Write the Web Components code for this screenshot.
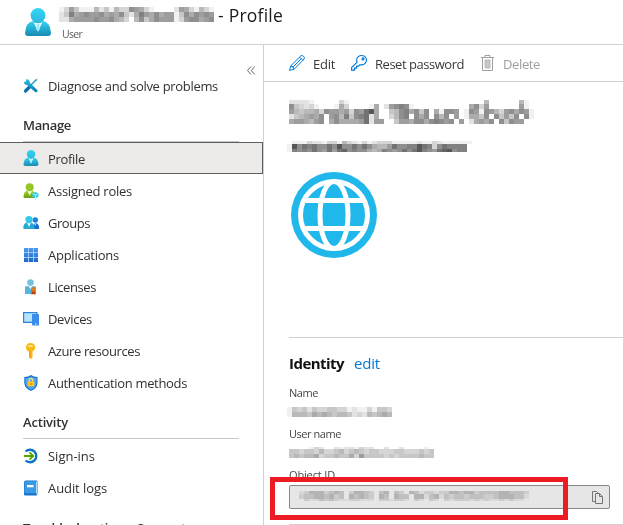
<!DOCTYPE html>
<html lang="en">
<head>
<meta charset="utf-8">
<title>Profile</title>
<style>
html,body{margin:0;height:100%;overflow:hidden;background:#fff}
body{font-family:"Open Sans","Noto Sans",sans-serif;color:#323130}
</style>
</head>
<body>
<user-blade></user-blade>
<script>
const ICONS={
user:`<svg viewBox="0 0 26 28"><defs><linearGradient id="a" x2="0" y2="1"><stop stop-color="#32d4f5"/><stop offset="1" stop-color="#198ab3"/></linearGradient><linearGradient id="b" x2="0" y2="1"><stop stop-color="#35d5f6"/><stop offset="1" stop-color="#2cb8dc"/></linearGradient></defs><path fill="url(#a)" d="M3 28Q0 28 0 25Q1 14 8 13H18Q25 14 26 25Q26 28 23 28Z"/><path fill="#e9fbff" d="M8.5 14L13 23.5L17.5 14Q13 16.5 8.500 14Z"/><path fill="#9ee9fb" d="M11.500 16h3l-.5 2 1 3-2 2.500-2-2.500 1-3z"/><circle cx="13" cy="7.500" r="7.400" fill="url(#b)"/></svg>`,
tools:`<svg viewBox="0 0 16 16"><defs><linearGradient id="a" x2="0" y2="1"><stop stop-color="#32bedd"/><stop offset="1" stop-color="#0078b4"/></linearGradient></defs><path d="M13.200 1.800 7 8" stroke="#2296c8" stroke-width="1.400"/><path d="M7.500 8 2.500 13" stroke="#0870ad" stroke-width="3.200" stroke-linecap="round"/><path fill="url(#a)" d="M3.500 1 2.800 3.400 1 4Q1 6.800 4.200 7L11.600 13.600Q13 15 14.200 13.700Q15.200 12.400 13.800 11.400L6.900 5Q7 1.600 3.500 1Z"/><path d="m12.500 1.500 2-.8-.8 2.200z" fill="#4a9fc4"/></svg>`,
roles:`<svg viewBox="0 0 16 16"><defs><linearGradient id="a" x2="0" y2="1"><stop stop-color="#a8d52c"/><stop offset="1" stop-color="#659f13"/></linearGradient></defs><path fill="url(#a)" d="M1.500 15Q.5 15 .5 13.500Q1 8 5 7.600H8Q12 8 12.500 13.500V15Z"/><path d="M4.500 8 6.700 12.500 9 8Z" fill="#f4fbd8"/><circle cx="6.700" cy="4.300" r="4" fill="#92c823"/><path d="m12.500 9 3 1.500v3L12.500 15.500 9.300 13.500v-3z" fill="#32cbe8"/><path d="m9.500 10.600 3 1.600 2.900-1.600M12.500 12v3" stroke="#b0effa" fill="none"/></svg>`,
groups:`<svg viewBox="0 0 16 16"><path d="M10 14q-.5-5 2.500-6Q16 8.500 16 13v1Z" fill="#136fcf"/><circle cx="12.300" cy="5" r="2.700" fill="#1683dc"/><path d="M1.200 14Q0 14 .3 12Q.8 8 4 7.500H7.500Q11.300 8 11.600 13v1Z" fill="#28a8d1"/><path d="m4.200 8 1.800 4 1.800-4Z" fill="#f0fcff"/><circle cx="6" cy="4.600" r="3.600" fill="#32c8e9"/><path d="m11.300 8.500 1 2.500 1-2.500z" fill="#d8eeff"/></svg>`,
apps:`<svg viewBox="0 0 16 16"><defs><linearGradient id="a" gradientUnits="userSpaceOnUse" x1="0" y1="1" x2="0" y2="15"><stop stop-color="#4b9cf0"/><stop offset="1" stop-color="#1f68c8"/></linearGradient></defs><path fill="#9cc8f4" d="M1 1h14v14H1z"/><path fill="url(#a)" d="M1 1h4v4H1zM6 1h4v4H6zM11 1h4v4h-4zM1 6h4v4H1zM6 6h4v4H6zM11 6h4v4h-4zM1 11h4v4H1zM6 11h4v4H6zM11 11h4v4h-4z"/></svg>`,
license:`<svg viewBox="0 0 16 16"><path d="M2 7.500 5.500 7 7.500 10 9.500 7 13 7.500V15H2Z" fill="#59b4d9"/><path d="m5.500 7 2 2.500 2-2.500z" fill="#e0f4fb"/><circle cx="7.500" cy="3.600" r="3.300" fill="#72c1df"/><path d="M8.600 11h3.600v5l-1.800-1.300L8.600 16z" fill="#b5440e"/><circle cx="10.400" cy="10.400" r="2.300" fill="#df7d18"/></svg>`,
devices:`<svg viewBox="0 0 16 16"><path d="M0 1h14.500v11H0z" fill="#2984df"/><path d="M1.200 2.200h12v8.500h-12z" fill="#b7e4fb"/><path d="M4 12h5v1.500H4z" fill="#fff"/><path d="M9 3h6q1 0 1 1v10.500H10q-1 0-1-1z" fill="#3a8de8"/><path d="M12 13h1.500" stroke="#d8eeff"/></svg>`,
key:`<svg viewBox="0 0 16 16"><path d="M7.500 0Q12 .2 12.200 4.500Q12 7.500 9.500 8.600V14.500L8 16 6 14.500V8.600Q3 7.500 3 4.500Q3.200.2 7.500 0Z" fill="#fcb913"/><path d="M5.300 3.200h4.500" stroke="#fff0ae" stroke-width="1.500"/><path d="M7 8v6.500" stroke="#f18d08"/></svg>`,
shield:`<svg viewBox="0 0 16 16"><path d="M8 0Q10.500 2 14.500 2V8Q14 13.500 8 16Q1.800 13.500 1.300 8V2Q5.500 2 8 0Z" fill="#126fcc"/><path d="M8 1.400Q10.500 3 13.500 3V8Q13 12.500 8 14.700Q3 12.500 2.400 8V3Q5.500 3 8 1.400Z" fill="#51a5f2"/><path d="M6.200 7V5.500q0-2 1.800-2t1.800 2V7" fill="none" stroke="#f7d875" stroke-width="1.300"/><path d="M4.700 6.500h6.600v4.700H4.700z" fill="#ffc51b"/><path d="M7 8.400h2v1H7z" fill="#bd8400"/></svg>`,
signin:`<svg viewBox="0 0 16 16"><path d="M2.600 3.500A6.300 6.300 0 1 1 2.600 12.500" fill="none" stroke="#0c72ca" stroke-width="2.400"/><path d="M1 8h9M6.500 4.300 10.300 8 6.500 11.700" fill="none" stroke="#57a300" stroke-width="1.800"/></svg>`,
book:`<svg viewBox="0 0 16 16"><path d="M3 .5h10.500q1 0 1 1v11.500l-1 2.500H2.300q-1.300 0-1.300-1.500V2.500Q1 .5 3 .5Z" fill="#1474ca"/><path d="M3 1.200H13v12H2Q1.500 13 1.500 12V2.700Q1.500 1.200 3 1.200Z" fill="#3a9ae5"/><path d="M13.500 1.500v12" stroke="#b8dcf6"/><path d="M4 5h6.500v2.300H4z" fill="#fff"/></svg>`,
edit:`<svg viewBox="0 0 16 16" fill="none" stroke="#0078d4"><path d="M.6 15.400 1.800 10.800 11.800.9Q13.300-.1 14.600 1.400Q16 2.900 15 4.300L5.100 14.200ZM1.800 10.800Q4.500 11.300 5.100 14.200M10.600 2.100 13.900 5.400M3.500 12.500 12.200 3.800"/></svg>`,
reset:`<svg viewBox="0 0 16 16" fill="none" stroke="#0078d4" stroke-width="1.100"><circle cx="12" cy="3.900" r="1"/><path d="M6.100 7.100Q4.900 3.700 7.300 1.700Q9.900-.4 13.200 1.100Q16.300 3.200 15.200 6.700Q13.400 10.500 9 9.700L7.600 11.100H5.600V13.100H3.600V15.100H.6V12.600Z"/></svg>`,
trash:`<svg viewBox="0 0 13 16" fill="none" stroke="#a19f9d"><path d="M0 2.500h13M4 2V.5h5V2M1.500 3v12.500h10V3"/><path d="M4 5h5v8H4z" fill="#c8c6c4" stroke="#bcbab8"/></svg>`,
copy:`<svg viewBox="0 0 11 13" fill="none" stroke="#767472"><path d="M3.500 10.500H.5V.5h4l2 2"/><path d="M3.500 2.500H7.500L10.500 5.500V12.500H3.500ZM7.500 2.500V5.500H10.500"/></svg>`,
globe:`<svg viewBox="0 0 86 86"><circle cx="43" cy="43" r="43" fill="#20b7eb"/><g fill="none" stroke="#fff" stroke-width="5"><circle cx="43" cy="43" r="33.500"/><ellipse cx="43" cy="43" rx="14" ry="33.500"/><path d="M13 28.500H73M13 56.500H73"/></g></svg>`,
collapse:`<svg viewBox="0 0 8 9" fill="none" stroke="#555" stroke-width=".9"><path d="M4 .5.500 4.500 4 8.500M7.700.5 4.200 4.500 7.700 8.500"/></svg>`
};
const define=(name,render,after)=>customElements.define(name,class extends HTMLElement{
 connectedCallback(){
  if(this.shadowRoot)return;
  this.attachShadow({mode:'open'}).innerHTML=render(this);
  if(after)after(this,this.shadowRoot);
 }
});
define('az-icon',e=>`<style>:host{display:block;flex:none;width:${e.getAttribute('w')||16}px;height:${e.getAttribute('h')||16}px}svg{display:block;width:100%;height:100%;overflow:visible}</style>${ICONS[e.getAttribute('name')]}`);

/* A line of text whose tracking is set so that it fills the width it is given. */
define('fit-text',e=>`<style>:host{display:block;white-space:nowrap;width:${e.getAttribute('w')}px}span{display:inline-block}</style><span>${e.getAttribute('text')}</span>`,(e,r)=>{
 const s=r.querySelector('span'),n=e.getAttribute('text').length;
 s.style.letterSpacing=((+e.getAttribute('w')-s.getBoundingClientRect().width)/n)+'px';
});

/* Mosaic over private data: one hex digit of darkness for each cell. */
define('pixel-mask',e=>{
 const rows=e.getAttribute('cells').trim().split(/\s+/),hs=e.getAttribute('rows').split(',').map(Number);
 let y=0,out='';
 rows.forEach((row,j)=>{[...row].forEach((c,i)=>{const v=255-parseInt(c,16)*14;if(c!=='0')out+=`<rect x="${i*5}" y="${y}" width="5" height="${hs[j]}" fill="rgb(${v},${v},${v})"/>`});y+=hs[j]});
 const w=Math.max(...rows.map(r=>r.length))*5;
 return `<style>:host{display:block;flex:none;width:${w}px;height:${y}px;mix-blend-mode:multiply}svg{display:block}</style><svg width="${w}" height="${y}" shape-rendering="crispEdges" aria-label="Redacted">${out}</svg>`;
});

define('nav-item',e=>`<style>
:host{display:flex;align-items:center;box-sizing:border-box;height:32px;padding-left:23px;gap:9px;font-size:13px;line-height:18px;color:#323130}
:host([selected]){background:#edebe9;border:1px solid #605e5c;border-left:0}
az-icon{margin-top:-1px}fit-text{margin-top:-1px}:host([selected]) fit-text{margin-top:1px}
</style><az-icon name="${e.getAttribute('icon')}"></az-icon><fit-text w="${e.getAttribute('w')}" text="${e.getAttribute('label')}"></fit-text>`);

define('nav-heading',e=>`<style>
:host{display:flex;align-items:center;box-sizing:border-box;height:33px;width:216px;margin-left:23px;border-bottom:1px solid #c8c6c4;font-size:13px;font-weight:600;color:#323130}
</style><fit-text w="${e.getAttribute('w')}" text="${e.getAttribute('label')}"></fit-text>`);

define('side-nav',()=>`<style>
:host{display:block;box-sizing:border-box;border-right:1px solid #d2d0ce;overflow:hidden}
.top{display:flex;justify-content:flex-end;height:25px;padding:21px 8px 0 0;box-sizing:border-box}
nav-item.first{margin-bottom:7px}nav-heading.act{margin-top:7px}nav-item.s{margin-top:1px}nav-heading.last{margin-top:8px}
</style>
<div class="top"><az-icon name="collapse" w="8" h="9"></az-icon></div>
<nav-item class="first" icon="tools" label="Diagnose and solve problems" w="170"></nav-item>
<nav-heading label="Manage" w="48"></nav-heading>
<nav-item selected icon="user" label="Profile" w="37"></nav-item>
<nav-item class="s" icon="roles" label="Assigned roles" w="84"></nav-item>
<nav-item icon="groups" label="Groups" w="42"></nav-item>
<nav-item icon="apps" label="Applications" w="71"></nav-item>
<nav-item icon="license" label="Licenses" w="48"></nav-item>
<nav-item icon="devices" label="Devices" w="44"></nav-item>
<nav-item icon="key" label="Azure resources" w="92"></nav-item>
<nav-item icon="shield" label="Authentication methods" w="139"></nav-item>
<nav-heading class="act" label="Activity" w="45"></nav-heading>
<nav-item class="s" icon="signin" label="Sign-ins" w="47"></nav-item>
<nav-item icon="book" label="Audit logs" w="59"></nav-item>
<nav-heading class="last" label="Troubleshooting + Support" w="163"></nav-heading>`);

define('blade-header',()=>`<style>
:host{display:flex;box-sizing:border-box;height:45px;border-bottom:1px solid #d2d0ce;padding:8px 0 0 25px;gap:8px}
.t{display:flex;align-items:flex-start;gap:4px;height:20px;font-size:17.5px;line-height:18px;color:#1b1a19}
.t fit-text{margin-top:-2px}pixel-mask{margin-top:-1px}
.u{margin-left:3px;font-size:10.5px;line-height:12px;color:#605e5c}
</style><az-icon name="user" w="26" h="28"></az-icon>
<div><div class="t"><pixel-mask rows="5,5,5" cells="1374111524153387631000027631531 2496787786768426976867714868787 2267777877865305846877713788678"></pixel-mask><fit-text w="65" text="- Profile"></fit-text></div><div class="u"><fit-text w="20" text="User"></fit-text></div></div>`);

define('command-button',e=>`<style>
:host{display:flex;align-items:center;gap:${e.getAttribute('gap')}px;font-size:13px;line-height:18px;color:#3b3a39}
:host([disabled]){color:#a19f9d}fit-text{margin-top:2px}
</style><az-icon name="${e.getAttribute('icon')}" w="${e.getAttribute('iw')||16}"></az-icon><fit-text w="${e.getAttribute('w')}" text="${e.getAttribute('label')}"></fit-text>`);

define('command-bar',()=>`<style>
:host{display:flex;box-sizing:border-box;height:37px;padding:0 0 0 25px;gap:16px;border-bottom:1px solid #d2d0ce}
command-button{margin-top:-1px}command-button[disabled]{margin-left:1px}
</style><command-button icon="edit" gap="8" w="22" label="Edit"></command-button><command-button icon="reset" gap="8" w="89" label="Reset password"></command-button><command-button disabled icon="trash" iw="13" gap="9" w="37" label="Delete"></command-button>`);

define('field-label',e=>`<style>:host{display:block;height:14px;font-size:11px;line-height:14px;color:#484644}</style><fit-text w="${e.getAttribute('w')}" text="${e.getAttribute('text')}"></fit-text>`);

define('copy-field',()=>`<style>
:host{display:flex;box-sizing:border-box;width:321px;height:24px;border:1px solid #8a8886;border-radius:2px;background:#e6e6e6;position:relative;align-items:center;justify-content:space-between;padding:0 6px 0 9px}
.mark{position:absolute;left:-20px;top:-9px;width:298px;height:43px;box-sizing:border-box;border:5px solid #ed1c24}
</style><slot></slot><az-icon name="copy" w="11" h="13"></az-icon><div class="mark"></div>`);

define('profile-pane',()=>`<style>
:host{display:block;overflow:hidden}
.body{padding:18px 0 0 25px}
.mail{margin:17px 0 0 -2px}
.globe{margin:20px 0 0 2px}
.rule{height:1px;background:#d2d0ce}
.r1{margin-top:79px}
.h{display:flex;gap:10px;margin-top:15px;height:20px;line-height:20px;font-size:15px}
.h .b{font-weight:700;color:#111}.h .l{color:#0078d4}
.n{margin-top:13px}.v1{margin:7px 0 0 -2px}.un{margin-top:10px}.v2{margin:6px 0 0}.o{margin-top:10px}
copy-field{margin-top:3px}copy-field pixel-mask{margin-top:-3px}.r2{margin-top:15px}
</style><command-bar></command-bar>
<div class="body">
<pixel-mask rows="4,5,5,5,5" cells="2222100000310000000000000000000000000005000000510 8432310001630000160278981000000000006837000000710 754556387767387ac60045896848061887018718753786871 245676807859489a260035890868085807016648084748081 677657806866667a27700477688689878070267680848770"></pixel-mask>
<pixel-mask class="mail" rows="3,5,3" cells="0111322133153213123331111121132111111 1c8a9a88a8c88a8a86557a8899ca938a99990 19898a87a7ab89886569878a8ac987abc8990"></pixel-mask>
<az-icon class="globe" name="globe" w="86" h="86"></az-icon>
<div class="rule r1"></div>
<div class="h"><fit-text class="b" w="55" text="Identity"></fit-text><fit-text class="l" w="26" text="edit"></fit-text></div>
<field-label class="n" w="29" text="Name"></field-label>
<pixel-mask class="v1" rows="5,5" cells="143424334433121131443 155546565455423254565"></pixel-mask>
<field-label class="un" w="52" text="User name"></field-label>
<pixel-mask class="v2" rows="2,5,4" cells="00001320021221322002002000010 44344353345345434433344333434 45455634454463744443434444544"></pixel-mask>
<field-label class="o" w="46" text="Object ID"></field-label>
<copy-field><pixel-mask rows="3,5,2" cells="1244423430244320340320431221224434423333443332 2334434230434320430433044134132332333223444331 0211323211221110221221021021021222121211212110"></pixel-mask></copy-field>
<div class="rule r2"></div>
</div>`);

define('user-blade',()=>`<style>
:host{display:grid;grid-template-rows:45px 480px;width:623px;height:525px;background:#fff;overflow:hidden}
.cols{display:grid;grid-template-columns:264px 1fr;min-height:0}
</style><blade-header></blade-header><div class="cols"><side-nav></side-nav><profile-pane></profile-pane></div>`);
</script>
</body>
</html>
